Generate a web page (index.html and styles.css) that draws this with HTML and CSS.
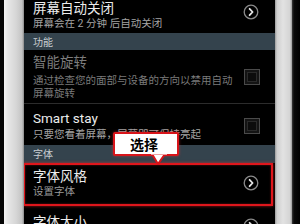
FILE: index.html
```html
<!DOCTYPE html>
<html>
<head>
<meta charset="utf-8">
<link rel="stylesheet" href="styles.css">
</head>
<body>
<div class="device">
  <div class="edge-l"></div>
  <div class="bezel-l"></div>
  <div class="screen">
    <div class="row row-top">
      <div class="texts">
        <div class="title">屏幕自动关闭</div>
        <div class="sub">屏幕会在 2 分钟 后自动关闭</div>
      </div>
      <svg class="chev chev-top" width="16" height="16" viewBox="0 0 16 16"><circle cx="8" cy="8" r="6.8" fill="none" stroke="#8a8a8a" stroke-width="1.3"/><path d="M6.6 4.8 L9.6 8 L6.6 11.2" fill="none" stroke="#e6e6e6" stroke-width="1.8" stroke-linecap="round" stroke-linejoin="round"/></svg>
    </div>
    <div class="header h1">功能</div>
    <div class="row row-rot">
      <div class="texts">
        <div class="title dis">智能旋转</div>
        <div class="sub dis two">通过检查您的面部与设备的方向以禁用自动<br>屏幕旋转</div>
      </div>
      <div class="check"></div>
    </div>
    <div class="row row-stay">
      <div class="texts">
        <div class="title">Smart stay</div>
        <div class="sub">只要您看着屏幕，屏幕即可保持亮起</div>
      </div>
      <div class="check"></div>
    </div>
    <div class="header h2">字体</div>
    <div class="row row-font">
      <div class="texts">
        <div class="title">字体风格</div>
        <div class="sub">设置字体</div>
      </div>
      <svg class="chev" width="16" height="16" viewBox="0 0 16 16"><circle cx="8" cy="8" r="6.8" fill="none" stroke="#8a8a8a" stroke-width="1.3"/><path d="M6.6 4.8 L9.6 8 L6.6 11.2" fill="none" stroke="#e6e6e6" stroke-width="1.8" stroke-linecap="round" stroke-linejoin="round"/></svg>
      <div class="callout">
        <span class="callout-text">选择</span>
        <svg class="callout-tip" width="16" height="12" viewBox="0 0 16 12"><path d="M1 0 L7 10 L14 0 Z" fill="#fff" stroke="#d8141a" stroke-width="2" stroke-linejoin="round"/><rect x="0" y="-2" width="16" height="2.6" fill="#fff"/></svg>
      </div>
    </div>
    <div class="row row-size">
      <div class="texts">
        <div class="title">字体大小</div>
      </div>
      <svg class="chev chev-size" width="16" height="16" viewBox="0 0 16 16"><circle cx="8" cy="8" r="6.8" fill="none" stroke="#8a8a8a" stroke-width="1.3"/><path d="M6.6 4.8 L9.6 8 L6.6 11.2" fill="none" stroke="#e6e6e6" stroke-width="1.8" stroke-linecap="round" stroke-linejoin="round"/></svg>
    </div>
  </div>
  <div class="bezel-r"></div>
  <div class="edge-r"></div>
</div>
</body>
</html>
```
FILE: styles.css
```css
html, body {
  margin: 0;
  padding: 0;
  background: #000;
}
body {
  width: 300px;
  height: 224px;
  overflow: hidden;
  font-family: "Roboto", "Noto Sans CJK SC", sans-serif;
}
.device {
  display: flex;
  height: 224px;
}
.edge-l {
  width: 4px;
  background: #050505;
}
.bezel-l {
  width: 20px;
  background: linear-gradient(to right, #f4f4f4 0, #e6e6e6 4px, #d6d6d6 12px, #c4c4c4 18px, #8a8a8a 20px);
}
.screen {
  flex: 1;
  background: #000;
  display: flex;
  flex-direction: column;
  overflow: hidden;
}
.bezel-r {
  width: 17px;
  background: linear-gradient(to right, #9a9a9a 0, #cfcfcf 2px, #e2e2e2 8px, #d4d4d4 15px, #9c9c9c 17px);
}
.edge-r {
  width: 8px;
  background: linear-gradient(to right, #3a3a3a 0, #0a0a0a 2px, #000 8px);
}
.row {
  display: flex;
  align-items: center;
  padding: 0 15px 0 9px;
  position: relative;
}
.texts {
  flex: 1;
  min-width: 0;
}
.title {
  font-size: 13.5px;
  line-height: 16px;
  color: #ececec;
  white-space: nowrap;
}
.sub {
  font-size: 10.5px;
  line-height: 13px;
  color: #a4a4a4;
  white-space: nowrap;
}
.title.dis {
  color: #7c7c7c;
}
.sub.dis {
  color: #7a7a7a;
}
.row-top {
  height: 30px;
  padding-bottom: 3px;
  align-items: flex-start;
}
.row-top .sub {
  margin-top: 1px;
}
.chev {
  flex: none;
}
.chev-top {
  margin-top: 4px;
  margin-right: 1px;
}
.row-font .chev, .row-size .chev {
  margin-right: 1px;
}
.header {
  background: #34434d;
  color: #c9ced2;
  font-size: 10px;
  padding-left: 9px;
  font-family: "Noto Sans CJK SC", sans-serif;
}
.h1 {
  height: 17px;
  line-height: 17px;
}
.h2 {
  height: 19px;
  line-height: 18px;
}
.row-rot {
  padding-top: 4px;
  padding-bottom: 3px;
  border-bottom: 1px solid #2c2c2c;
}
.row-rot .sub {
  margin-top: 4px;
}
.row-stay {
  padding-top: 6px;
  padding-bottom: 4px;
}
.row-stay .sub {
  margin-top: 2px;
}
.check {
  width: 14px;
  height: 14px;
  border: 1px solid #4a4a4a;
  background: #0c0c0c;
  box-shadow: inset 0 0 0 2px #141414, inset 0 0 0 3px #2a2a2a;
  flex: none;
}
.row-font {
  height: 44px;
  box-sizing: border-box;
  padding-top: 5px;
  padding-bottom: 8px;
}
.row-font::after {
  content: "";
  position: absolute;
  left: -1px;
  right: 2px;
  top: 0;
  bottom: 0;
  border: 2.5px solid #e0161c;
  box-shadow: 0 0 3px rgba(255, 40, 40, 0.6), inset 0 0 2px rgba(255, 40, 40, 0.5);
  pointer-events: none;
}
.row-font .sub {
  margin-top: 1px;
  color: #9a9a9a;
}
.row-size {
  padding-top: 4px;
  padding-bottom: 8px;
}
.chev-size {
  margin-top: 8px;
}
.callout {
  position: absolute;
  left: 89px;
  top: -31px;
  width: 62px;
  height: 20px;
  background: #fff;
  border: 2px solid #d8141a;
  border-radius: 2px;
  box-shadow: 0 0 3px rgba(255, 60, 60, 0.5);
  display: flex;
  align-items: center;
  justify-content: center;
  z-index: 2;
}
.callout-text {
  font-family: "Noto Sans CJK SC", sans-serif;
  font-weight: 700;
  font-size: 14px;
  color: #000;
  line-height: 16px;
  margin-right: 4px;
}
.callout-tip {
  position: absolute;
  left: 36px;
  top: 20px;
}
```
